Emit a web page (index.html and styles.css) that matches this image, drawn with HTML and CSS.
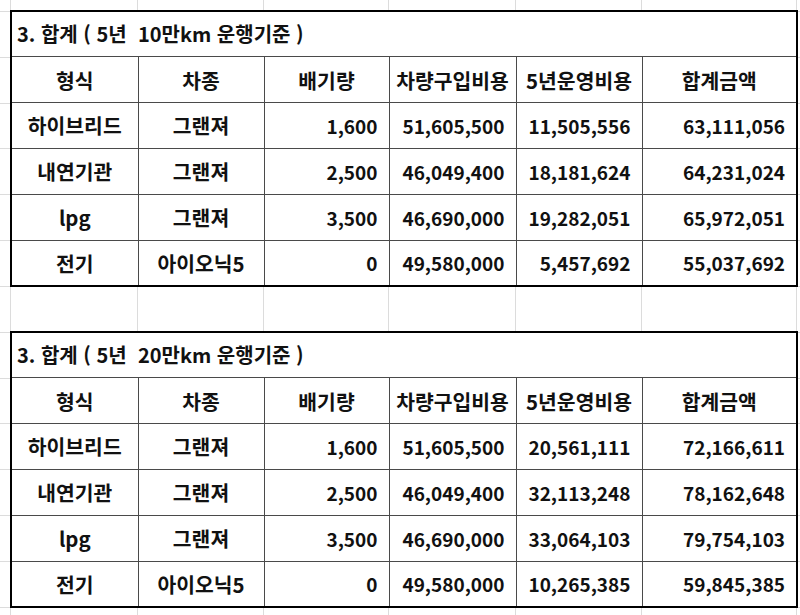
FILE: index.html
```html
<!DOCTYPE html>
<html lang="ko">
<head>
<meta charset="utf-8">
<title>합계</title>
<link rel="stylesheet" href="styles.css">
</head>
<body>
<div class="sheet">
  <table class="sum">
    <colgroup>
      <col class="c1"><col class="c2"><col class="c3"><col class="c4"><col class="c5"><col class="c6">
    </colgroup>
    <tr class="title"><td colspan="6">3. 합계 ( 5년&nbsp; 10만km 운행기준 )</td></tr>
    <tr class="head"><th>형식</th><th>차종</th><th>배기량</th><th>차량구입비용</th><th>5년운영비용</th><th>합계금액</th></tr>
    <tr><td class="ctr">하이브리드</td><td class="ctr">그랜져</td><td class="num">1,600</td><td class="num">51,605,500</td><td class="num">11,505,556</td><td class="num">63,111,056</td></tr>
    <tr><td class="ctr">내연기관</td><td class="ctr">그랜져</td><td class="num">2,500</td><td class="num">46,049,400</td><td class="num">18,181,624</td><td class="num">64,231,024</td></tr>
    <tr><td class="ctr">lpg</td><td class="ctr">그랜져</td><td class="num">3,500</td><td class="num">46,690,000</td><td class="num">19,282,051</td><td class="num">65,972,051</td></tr>
    <tr><td class="ctr">전기</td><td class="ctr">아이오닉5</td><td class="num">0</td><td class="num">49,580,000</td><td class="num">5,457,692</td><td class="num">55,037,692</td></tr>
  </table>
  <table class="sum">
    <colgroup>
      <col class="c1"><col class="c2"><col class="c3"><col class="c4"><col class="c5"><col class="c6">
    </colgroup>
    <tr class="title"><td colspan="6">3. 합계 ( 5년&nbsp; 20만km 운행기준 )</td></tr>
    <tr class="head"><th>형식</th><th>차종</th><th>배기량</th><th>차량구입비용</th><th>5년운영비용</th><th>합계금액</th></tr>
    <tr><td class="ctr">하이브리드</td><td class="ctr">그랜져</td><td class="num">1,600</td><td class="num">51,605,500</td><td class="num">20,561,111</td><td class="num">72,166,611</td></tr>
    <tr><td class="ctr">내연기관</td><td class="ctr">그랜져</td><td class="num">2,500</td><td class="num">46,049,400</td><td class="num">32,113,248</td><td class="num">78,162,648</td></tr>
    <tr><td class="ctr">lpg</td><td class="ctr">그랜져</td><td class="num">3,500</td><td class="num">46,690,000</td><td class="num">33,064,103</td><td class="num">79,754,103</td></tr>
    <tr><td class="ctr">전기</td><td class="ctr">아이오닉5</td><td class="num">0</td><td class="num">49,580,000</td><td class="num">10,265,385</td><td class="num">59,845,385</td></tr>
  </table>
</div>
</body>
</html>
```
FILE: styles.css
```css
html, body {
  margin: 0;
  padding: 0;
}
body {
  width: 800px;
  height: 615px;
  overflow: hidden;
  background-color: #fff;
  background-image:
    linear-gradient(#dcdcdc, #dcdcdc),
    linear-gradient(#dcdcdc, #dcdcdc),
    linear-gradient(#dcdcdc, #dcdcdc),
    linear-gradient(#dcdcdc, #dcdcdc),
    linear-gradient(#dcdcdc, #dcdcdc),
    linear-gradient(#dcdcdc, #dcdcdc),
    linear-gradient(#dcdcdc, #dcdcdc),
    repeating-linear-gradient(to bottom, #dcdcdc 0 1px, transparent 1px 45.83px);
  background-size: 1px 100%, 1px 100%, 1px 100%, 1px 100%, 1px 100%, 1px 100%, 1px 100%, 100% 100%;
  background-position: 10px 0, 137px 0, 263px 0, 388px 0, 515px 0, 641px 0, 796px 0, 0 11px;
  background-repeat: no-repeat, no-repeat, no-repeat, no-repeat, no-repeat, no-repeat, no-repeat, repeat;
  font-family: "Noto Sans CJK KR", "Noto Sans", sans-serif;
  color: #111;
}
.sheet {
  padding: 10px 0 0 10px;
  display: flex;
  flex-direction: column;
  gap: 44px;
}
.sum {
  border-collapse: collapse;
  table-layout: fixed;
  width: 786px;
  border: 2px solid #000;
  background: #fff;
  font-size: 20.4px;
  font-weight: 700;
  line-height: 1;
}
.c1 { width: 127px; }
.c2 { width: 126px; }
.c3 { width: 125px; }
.c4 { width: 127px; }
.c5 { width: 126px; }
.c6 { width: 155px; }
.sum tr {
  height: 45.83px;
}
.sum td, .sum th {
  border: 1px solid #4a4a4a;
  padding: 0;
  vertical-align: middle;
  white-space: nowrap;
}
.sum th {
  font-weight: 700;
  text-align: center;
}
.title td {
  text-align: left;
  padding-left: 5px;
  font-size: 20px;
}
.ctr {
  text-align: center;
}
.num {
  text-align: right;
  padding-right: 11px !important;
  font-size: 19px;
}
```
